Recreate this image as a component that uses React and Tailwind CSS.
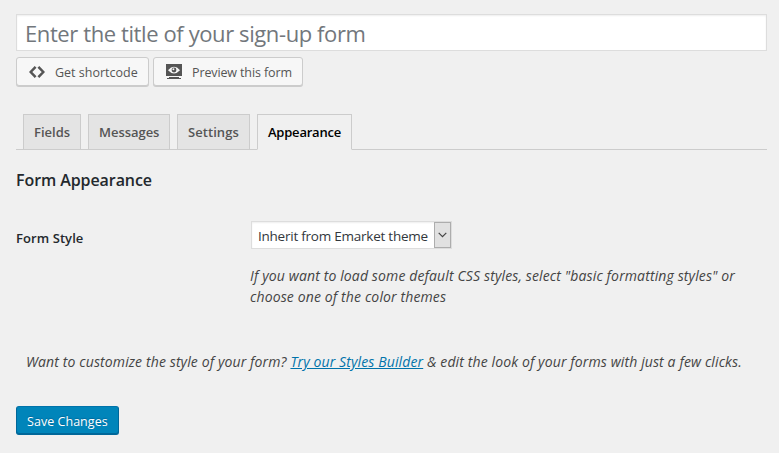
const tabs = [
  { label: 'Fields', width: 'w-[58px]', text: 'tracking-[0px]' },
  { label: 'Messages', width: 'w-[82px]', text: 'tracking-[-0.04px]' },
  { label: 'Settings', width: 'w-[73px]', text: 'tracking-[0.06px]' },
  { label: 'Appearance', width: 'w-[95px]', text: 'tracking-[-0.22px]', active: true },
];

function CodeIcon() {
  return (
    <svg className="shrink-0" width="16" height="12" viewBox="0 0 16 12" fill="none" stroke="#555" strokeWidth="2.5">
      <path d="M6.6.9 1.7 6l4.9 5.1M9.4.9 14.3 6l-4.9 5.1" />
    </svg>
  );
}

function PreviewIcon() {
  return (
    <svg className="shrink-0" width="16" height="15" viewBox="0 0 16 15" shapeRendering="geometricPrecision">
      <path fill="#555" d="M0 0h16v12H0zM3 13h10v1H3zM1 14h14v1H1z" />
      <path fill="#f7f7f7" d="M2 6.2Q8-.6 14 6.2 8 12.6 2 6.2z" />
      <circle cx="8" cy="6" r="2.4" fill="#555" />
      <circle cx="7.4" cy="5.3" r="1" fill="#f7f7f7" />
    </svg>
  );
}

export default function App() {
  return (
    <main className="h-[453px] w-[779px] overflow-hidden bg-[#f0f0f0] pl-4 pr-3 pt-[14px] font-['Open_Sans','Noto_Sans',sans-serif] text-[13px] text-[#444]">
      <input
        aria-label="Form title"
        placeholder="Enter the title of your sign-up form"
        className="block h-[37px] w-[751px] border border-[#ddd] bg-white px-[8px] text-[22px] tracking-[-0.4px] shadow-[inset_0_1px_2px_rgba(0,0,0,0.07)] outline-none placeholder:text-[#72777c]"
      />

      <div className="mt-[6px] flex gap-1">
        <button className="flex h-[29px] w-[133px] items-center rounded-[3px] border border-[#ccc] bg-[#f7f7f7] pl-[12px] text-[12.5px] text-[#555] shadow-[0_1px_0_#ccc]">
          <CodeIcon />
          <span className="ml-[10px] mt-[3px] whitespace-nowrap">Get shortcode</span>
        </button>
        <button className="flex h-[29px] w-[150px] items-center rounded-[3px] border border-[#ccc] bg-[#f7f7f7] pl-[12px] text-[12.5px] text-[#555] shadow-[0_1px_0_#ccc]">
          <PreviewIcon />
          <span className="ml-[10px] mt-[3px] whitespace-nowrap tracking-[-0.12px]">Preview this form</span>
        </button>
      </div>

      <nav className="mt-[28px] flex h-[36px] gap-[7px] border-b border-[#ccc] pl-[7px]">
        {tabs.map((tab) => (
          <a
            key={tab.label}
            className={`flex h-[36px] items-center border border-[#ccc] pl-[10px] pt-[2px] text-[13px] font-semibold ${tab.width} ${tab.text} ${
              tab.active ? 'border-b-[#f0f0f0] bg-[#f0f0f0] text-black' : 'bg-[#e4e4e4] text-[#555]'
            }`}
          >
            {tab.label}
          </a>
        ))}
      </nav>

      <h2 className="mt-[19px] whitespace-nowrap text-[16px] font-semibold leading-[22px] tracking-[-0.08px] text-[#23282d]">Form Appearance</h2>

      <div className="mt-[30px] flex">
        <label className="w-[234px] pt-[7px] text-[13px] font-semibold leading-[20px] tracking-[0.08px] text-[#23282d]">Form Style</label>
        <div>
          <div className="ml-px flex h-[28px] w-[201px] justify-between border border-[#ddd] bg-white shadow-[inset_0_1px_2px_rgba(0,0,0,0.07)]">
            <span className="whitespace-nowrap pl-[6px] pt-[4px] text-[13.5px] leading-[20px] tracking-[-0.24px] text-[#32373c]">Inherit from Emarket theme</span>
            <span className="flex h-[26px] w-[17px] shrink-0 items-center justify-center border border-[#adadad] bg-[#e1e1e1]">
              <svg width="9" height="6" viewBox="0 0 9 6" fill="none" stroke="#444" strokeWidth="1.2">
                <path d="m.7.8 3.8 3.8L8.3.8" />
              </svg>
            </span>
          </div>
          <p className="mt-[16px] whitespace-nowrap text-[14px] italic leading-[21px] tracking-[0.13px]">
            <span className="block">If you want to load some default CSS styles, select "basic formatting styles" or</span>
            <span className="block">choose one of the color themes</span>
          </p>
        </div>
      </div>

      <p className="mt-[44px] whitespace-nowrap pl-[10px] text-[14px] italic leading-[21px] tracking-[0.12px]">
        Want to customize the style of your form? <a className="text-[#0073aa] underline">Try our Styles Builder</a> &amp; edit the look of your forms with just a few clicks.
      </p>

      <button className="mt-[34px] flex h-[29px] w-[103px] items-center rounded-[3px] border border-[#006799] border-t-[#0073aa] bg-[#0085ba] pl-[10px] pt-[3px] text-[12.5px] tracking-[0.04px] text-white shadow-[inset_0_-1px_0_#006799] [text-shadow:0_-1px_1px_#006799]">
        Save Changes
      </button>
    </main>
  );
}
